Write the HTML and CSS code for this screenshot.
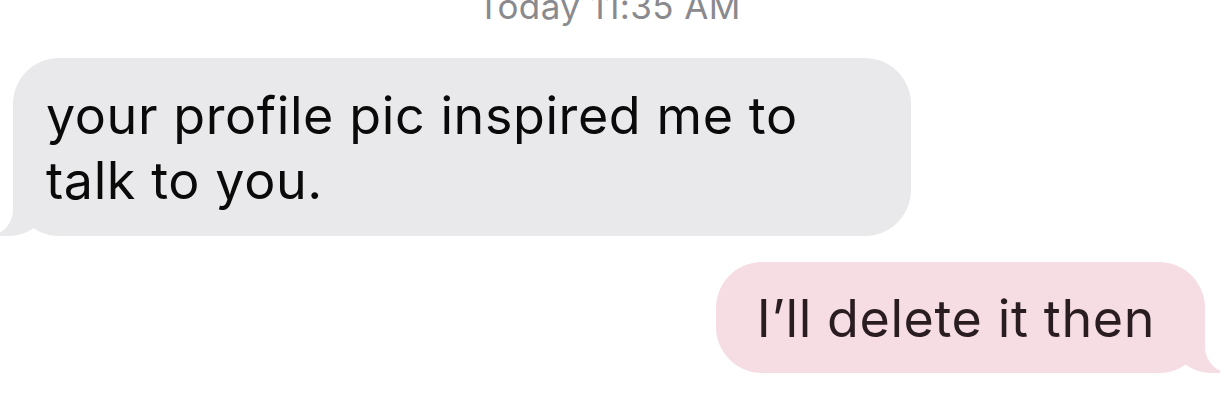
FILE: index.html
```html
<!DOCTYPE html>
<html lang="en">
<head>
    <meta charset="UTF-8">
    <meta name="viewport" content="width=device-width, initial-scale=1.0">
    <title>Messages</title>
    <link rel="stylesheet" href="styles.css">
</head>
<body>

<main class="thread">
    <p class="timestamp">Today 11:35 AM</p>

    <div class="bubble received">
        your profile pic inspired me to talk to you.
    </div>

    <div class="bubble sent">
        I’ll delete it then
    </div>
</main>

</body>
</html>
```

FILE: styles.css
```css
body {
    font-family: 'Inter', 'Noto Sans', sans-serif;
    background-color: #FFFFFF;
    color: #000000;
    margin: 0;
    padding: 0;
    overflow: hidden;
}

.thread {
    display: flex;
    flex-direction: column;
    padding: 0 20px 0 13px;
}

.timestamp {
    margin: -11px 0 34px;
    text-align: center;
    font-size: 35px;
    line-height: 35px;
    letter-spacing: 0.4px;
    color: #8A8A8E;
}

.bubble {
    position: relative;
    font-size: 52px;
    line-height: 65px;
    letter-spacing: 0.6px;
    border-radius: 46px;
}

/* tail: coloured blob, then a white cut-out over it */
.bubble::before,
.bubble::after {
    content: "";
    position: absolute;
    bottom: 0;
    height: 56px;
}

.received {
    align-self: flex-start;
    width: 898px;
    box-sizing: border-box;
    padding: 25px 90px 23px 33px;
    background-color: #E9E9EB;
    color: #0A0A0A;
}

.received::before {
    left: -13px;
    width: 46px;
    background-color: #E9E9EB;
    border-bottom-right-radius: 38px 30px;
}

.received::after {
    left: -40px;
    width: 40px;
    background-color: #FFFFFF;
    border-bottom-right-radius: 26px;
}

.sent {
    align-self: flex-end;
    margin-top: 26px;
    padding: 24px 50px 22px 41px;
    background-color: #F6DCE3;
    color: #2A1D22;
}

.sent::before {
    right: -15px;
    width: 46px;
    background-color: #F6DCE3;
    border-bottom-left-radius: 38px 30px;
}

.sent::after {
    right: -40px;
    width: 40px;
    background-color: #FFFFFF;
    border-bottom-left-radius: 26px;
}
```
